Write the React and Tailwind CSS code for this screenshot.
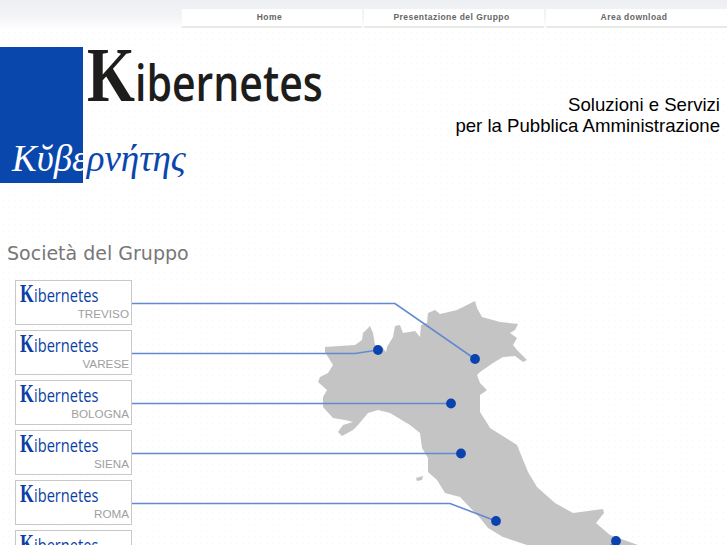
const navItems = [
  { label: "Home", width: "w-[180px]" },
  { label: "Presentazione del Gruppo", width: "w-[180px]" },
  { label: "Area download", width: "flex-1" },
];

const companies = ["TREVISO", "VARESE", "BOLOGNA", "SIENA", "ROMA", ""];

// outline of the map, clockwise from the north west
const italy =
  "M325,347 L340,346 L355,345 L362,340 L363,333 L370,326 L373,333 L375,345 L382,347 L386,352 L387,347 L393,337 L395,326 L400,325 L403,333 L415,331 L420,337 L421,325 L427,323 L428,313 L435,310 L440,314 L457,310 L473,302 L475,301 L477,308 L482,317 L500,322 L518,324 L515,330 L510,333 L517,338 L513,345 L517,350 L527,360 L523,362 L515,356 L503,357 L493,363 L480,372 L477,375 L480,383 L487,390 L483,393 L480,395 L480,412 L487,423 L490,428 L517,445 L528,472 L537,487 L555,503 L573,513 L603,509 L604,513 L596,523 L610,535 L638,545 L527,545 L503,537 L488,528 L480,518 L460,497 L445,493 L437,480 L428,472 L428,458 L422,448 L420,433 L410,425 L390,413 L378,410 L368,413 L358,425 L353,430 L342,436 L338,432 L343,425 L353,422 L345,420 L333,418 L323,407 L323,397 L327,390 L318,382 L320,377 L328,373 L333,365 L325,352 Z";

const links = [
  { points: "132,303.5 395,303.5 475,359", dot: [475, 359] },
  { points: "132,353.5 355,353.5 378,350", dot: [378, 350] },
  { points: "132,403.5 451,403.5", dot: [451, 403.5] },
  { points: "132,453.5 461,453.5", dot: [461, 453.5] },
  { points: "132,503.5 450,503.5 496,521", dot: [496, 521] },
  { points: "616,541 606,549", dot: [616, 541] },
];

const GroupMap = () => (
  <svg
    className="absolute left-0 top-0 pointer-events-none"
    width="727"
    height="545"
    viewBox="0 0 727 545"
  >
    <path d={italy} fill="#c4c4c4" />
    <path d="M416,478 L423,476 L422,480 L417,481 Z" fill="#c4c4c4" />
    {links.map((link, i) => (
      <g key={i}>
        <polyline
          points={link.points}
          fill="none"
          stroke="#6389d0"
          strokeWidth="1.6"
        />
        <circle cx={link.dot[0]} cy={link.dot[1]} r="4.9" fill="#0a43b0" />
      </g>
    ))}
  </svg>
);

const CompanyCard = ({ city }) => (
  <div className="w-[117px] h-[45px] border border-[#c8c8c8] bg-white pl-[4px] pr-[2px] shrink-0 overflow-hidden">
    <div className="h-[25px] flex items-baseline text-[#0b3fa5] whitespace-nowrap">
      <span className="w-[14px] text-[26px] leading-[25px] font-bold font-['Liberation_Serif',serif] scale-x-[0.68] origin-left">
        K
      </span>
      <span className="text-[19px] leading-[25px] font-medium font-['Open_Sans',sans-serif] scale-x-[0.77] origin-left">
        ibernetes
      </span>
    </div>
    <p className="text-right text-[11.7px] leading-[15px] text-[#a0a0a0] font-['Liberation_Sans',sans-serif]">
      {city}
    </p>
  </div>
);

const App = () => {
  return (
    <div className="relative h-[545px] overflow-hidden bg-white bg-[radial-gradient(#fbfbfb_1px,transparent_1px)] bg-[length:6px_6px]">
      <div className="h-[30px] pt-[9px] pl-[182px] bg-gradient-to-b from-[#edeff3] via-[#f2f3f5] to-white">
        <nav className="flex gap-[2px]">
          {navItems.map((item) => (
            <a
              key={item.label}
              className={`${item.width} h-[19px] pr-[5px] bg-white border-b-2 border-[#e6ebe6] text-center text-[8.5px] leading-[16px] tracking-[0.45px] font-bold text-[#666] font-['Liberation_Sans',sans-serif]`}
            >
              {item.label}
            </a>
          ))}
        </nav>
      </div>

      <header className="flex justify-between mt-[17px] h-[136px] pr-[7px]">
        <div className="flex">
          <div className="w-[83px] h-[136px] bg-[#0a47ad] flex items-end pl-[12px]">
            <p className="italic text-[37px] leading-[48px] whitespace-nowrap font-['Liberation_Serif',serif]">
              <span className="text-white">Κῠβε</span>
              <span className="text-[#0a47ad]">ρνήτης</span>
            </p>
          </div>
          <div className="pl-[4px] h-[56px] flex items-baseline text-[#1d1d1b] whitespace-nowrap">
            <span className="w-[48px] text-[79px] leading-[56px] font-bold font-['Liberation_Serif',serif] scale-x-[0.78] origin-left">
              K
            </span>
            <span className="text-[50px] leading-[56px] font-semibold font-['Open_Sans',sans-serif] scale-x-[0.82] origin-left">
              ibernetes
            </span>
          </div>
        </div>
        <p className="pt-[47px] text-right text-[18.6px] leading-[21px] text-black font-['Liberation_Sans',sans-serif]">
          Soluzioni e Servizi
          <br />
          per la Pubblica Amministrazione
        </p>
      </header>

      <h2 className="mt-[58px] pl-[7px] text-[19px] leading-[24px] text-[#777] font-['DejaVu_Sans',sans-serif]">
        Società del Gruppo
      </h2>

      <GroupMap />

      <div className="relative mt-[15px] pl-[15px] flex flex-col gap-[5px]">
        {companies.map((city) => (
          <CompanyCard key={city} city={city} />
        ))}
      </div>
    </div>
  );
};

export default App;
